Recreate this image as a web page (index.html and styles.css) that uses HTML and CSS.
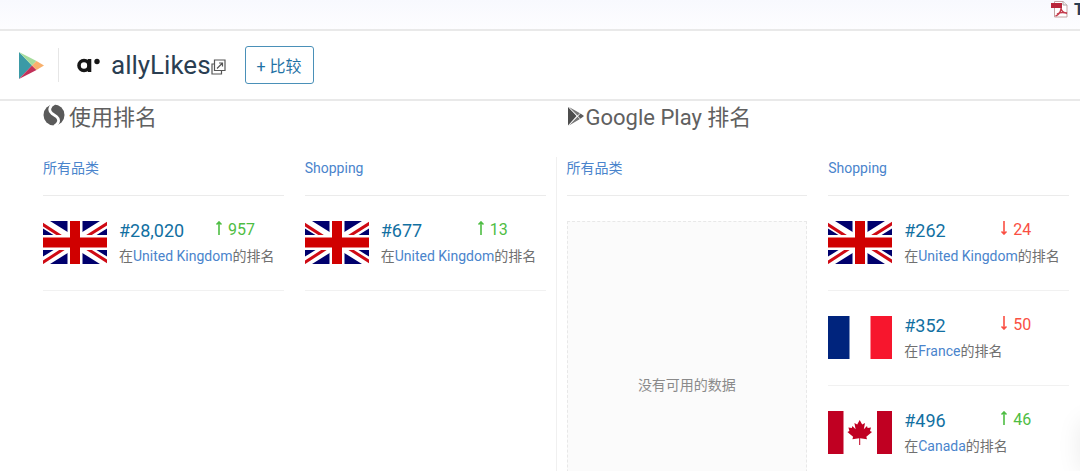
FILE: index.html
```
<!DOCTYPE html>
<html lang="zh-CN">
    <head>
        <meta charset="UTF-8">
        <meta name="viewport" content="width=device-width, initial-scale=1.0">
        <title>allyLikes</title>
        <link rel="stylesheet" href="styles.css">
    </head>
    <body>
        <!-- iconos compartidos -->
        <svg class="sprite" aria-hidden="true">
            <symbol id="flag-gb" viewBox="0 0 64 43">
                <rect width="64" height="43" fill="#00006d"/>
                <path d="M-4 -1L68 44M68 -1L-4 44" stroke="#fff" stroke-width="10"/>
                <path d="M-1 3L20 16.500M42 16.500L65 2M-1 42L22 27M43 27L65 41" stroke="#cf0a14" stroke-width="3"/>
                <path d="M32 0V43M0 21.500H64" stroke="#fff" stroke-width="15"/>
                <path d="M32 0V43M0 21.500H64" stroke="#d00000" stroke-width="10"/>
            </symbol>
            <symbol id="flag-fr" viewBox="0 0 64 43">
                <rect width="64" height="43" fill="#fff"/>
                <rect width="21.500" height="43" fill="#00247d"/>
                <rect x="42.500" width="21.500" height="43" fill="#f7162d"/>
            </symbol>
            <symbol id="flag-ca" viewBox="0 0 64 43">
                <rect width="64" height="43" fill="#fff"/>
                <path d="M0 0H15.500V43H0ZM49 0H64V43H49Z" fill="#c00022"/>
                <path d="M31.700 9L34.200 13.400L37 12L35.800 18.200L39 15L39.600 17L43 16.400L42 20L44 21L38.300 25.800L39 28.200L32.200 27.200V34H31.200V27.200L24.400 28.200L25.100 25.800L19.400 21L21.400 20L20.400 16.400L23.800 17L24.400 15L27.600 18.200L26.400 12L29.200 13.400Z" fill="#c00022"/>
            </symbol>
            <symbol id="arrow-up" viewBox="0 0 8 14">
                <path d="M4 14V1M1.500 3.500L4 1L6.500 3.500" fill="none" stroke="currentColor" stroke-width="1.600"/>
            </symbol>
            <symbol id="arrow-down" viewBox="0 0 8 14">
                <path d="M4 0V13M1.500 10.500L4 13L6.500 10.500" fill="none" stroke="currentColor" stroke-width="1.600"/>
            </symbol>
        </svg>

        <div class="topbar">
            <a class="pdf-link" href="#">
                <svg width="17" height="18" viewBox="0 0 17 18" aria-hidden="true">
                    <path d="M3.500 1.500H12L16 5V17H3.500Z" fill="#fff" stroke="#c4a3a3"/>
                    <path d="M12 1.500V5H16" fill="#eee" stroke="#b0a0a0"/>
                    <rect y="3" width="11" height="5" fill="#b9253b"/>
                    <path d="M10 8C10 10 12 12.500 16 13.500M10 9C9.500 12 7.500 15 4.500 16M6 14C9 12 12 12 16 13" fill="none" stroke="#c43a4c" stroke-width="1.500"/>
                </svg>
                <span>T</span>
            </a>
        </div>

        <header class="app-header">
            <svg class="store-icon" width="25" height="27" viewBox="0 0 25 27" role="img" aria-label="Google Play">
                <path d="M0 0L13 13.500L0 27Z" fill="#3b9aa6"/>
                <path d="M0 0L17.500 9L13 13.500Z" fill="#a5dc9c"/>
                <path d="M0 27L13 13.500L17.500 18Z" fill="#c23159"/>
                <path d="M17.500 9L25 13.500L17.500 18L13 13.500Z" fill="#f8b06c"/>
            </svg>
            <span class="separator"></span>
            <svg class="app-icon" width="24" height="16" viewBox="0 0 24 16" aria-hidden="true">
                <circle cx="7" cy="8.500" r="5" fill="none" stroke="#161616" stroke-width="3.600"/>
                <path d="M12.500 2V15" stroke="#161616" stroke-width="3.600"/>
                <circle cx="20" cy="4.500" r="2.700" fill="#161616"/>
            </svg>
            <h1>allyLikes</h1>
            <a class="external" href="#" aria-label="allyLikes">
                <svg width="15" height="16" viewBox="0 0 15 16">
                    <path d="M3.500 1H14V11.500H3.500ZM3.500 5H1V15H10.500V11.500M6 9.500L11.500 4M8 4H11.500V7.500" fill="none" stroke="#555" stroke-width="1.200"/>
                </svg>
            </a>
            <button class="compare" type="button">+ 比较</button>
        </header>

        <main class="ranks">
            <section class="panel">
                <h2>
                    <svg class="title-icon" width="22" height="22" viewBox="0 0 22 22" aria-hidden="true">
                        <circle cx="11" cy="11" r="10.500" fill="#5a5a5a"/>
                        <path d="M11.500 -0.500C6 2 5.500 7 9 9.500L13.500 12.500C17 15.500 16 20 11 22.500" fill="none" stroke="#fff" stroke-width="2.800"/>
                    </svg>
                    <span>使用排名</span>
                </h2>
                <div class="columns">
                    <div class="column">
                        <h3><a href="#">所有品类</a></h3>
                        <div class="rank">
                            <svg class="flag"><use href="#flag-gb"/></svg>
                            <div class="info">
                                <p class="line"><span class="number">#28,020</span><span class="change up"><svg class="arrow"><use href="#arrow-up"/></svg>957</span></p>
                                <p class="place">在<a href="#">United Kingdom</a>的排名</p>
                            </div>
                        </div>
                    </div>
                    <div class="column">
                        <h3><a href="#">Shopping</a></h3>
                        <div class="rank">
                            <svg class="flag"><use href="#flag-gb"/></svg>
                            <div class="info">
                                <p class="line"><span class="number">#677</span><span class="change up"><svg class="arrow"><use href="#arrow-up"/></svg>13</span></p>
                                <p class="place">在<a href="#">United Kingdom</a>的排名</p>
                            </div>
                        </div>
                    </div>
                </div>
            </section>

            <section class="panel">
                <h2>
                    <svg class="title-icon play" width="18" height="20" viewBox="0 0 18 20" aria-hidden="true">
                        <path d="M1 1V19.500L9.500 10Z" fill="#4d4d4d"/>
                        <path d="M2 1L13 7.200L10.500 9.500ZM2 19.500L13 13L10.500 10.800Z" fill="#777"/>
                        <path d="M13.500 7.500L17 10L13.500 12.700L11 10.200Z" fill="#5c5c5c"/>
                    </svg>
                    <span>Google Play 排名</span>
                </h2>
                <div class="columns">
                    <div class="column">
                        <h3><a href="#">所有品类</a></h3>
                        <div class="empty">没有可用的数据</div>
                    </div>
                    <div class="column">
                        <h3><a href="#">Shopping</a></h3>
                        <div class="rank">
                            <svg class="flag"><use href="#flag-gb"/></svg>
                            <div class="info">
                                <p class="line"><span class="number">#262</span><span class="change down"><svg class="arrow"><use href="#arrow-down"/></svg>24</span></p>
                                <p class="place">在<a href="#">United Kingdom</a>的排名</p>
                            </div>
                        </div>
                        <div class="rank">
                            <svg class="flag"><use href="#flag-fr"/></svg>
                            <div class="info">
                                <p class="line"><span class="number">#352</span><span class="change down"><svg class="arrow"><use href="#arrow-down"/></svg>50</span></p>
                                <p class="place">在<a href="#">France</a>的排名</p>
                            </div>
                        </div>
                        <div class="rank">
                            <svg class="flag"><use href="#flag-ca"/></svg>
                            <div class="info">
                                <p class="line"><span class="number">#496</span><span class="change up"><svg class="arrow"><use href="#arrow-up"/></svg>46</span></p>
                                <p class="place">在<a href="#">Canada</a>的排名</p>
                            </div>
                        </div>
                    </div>
                </div>
            </section>
        </main>

        <div class="side-widget"></div>
    </body>
</html>
```

FILE: styles.css
```
* {
    box-sizing: border-box;
}

body {
    margin: 0;
    height: 100vh;
    overflow: hidden;
    background-color: #fff;
    font-family: Roboto, 'Noto Sans CJK SC', sans-serif;
    font-size: 14px;
    color: #707070;
}

h1,
h2,
h3,
p {
    margin: 0;
    font-weight: normal;
}

a {
    color: #4a84cc;
    text-decoration: none;
}

svg {
    display: block;
    flex-shrink: 0;
}

.sprite {
    position: absolute;
    width: 0;
    height: 0;
}

.topbar {
    display: flex;
    justify-content: flex-end;
    height: 31px;
    background: linear-gradient(#f8f9fe, #fdfdff);
    border-bottom: 2px solid #e9e9e9;
}

.pdf-link {
    display: flex;
    gap: 6px;
    height: 20px;
    line-height: 20px;
    margin-right: -4px;
    font-size: 16px;
    font-weight: bold;
    color: #2a3e52;
}

.app-header {
    display: flex;
    align-items: center;
    height: 70px;
    padding: 0 19px;
    border-bottom: 2px solid #e9e9e9;
}

.separator {
    width: 1px;
    height: 34px;
    margin: 0 18px 0 14px;
    background-color: #e6e6e6;
}

.app-header h1 {
    margin-left: 10px;
    font-size: 26px;
    line-height: 32px;
    color: #2a3e52;
}

.external {
    margin-top: 4px;
}

.compare {
    height: 38px;
    margin-left: 19px;
    padding: 0 11px;
    background-color: #fff;
    border: 1px solid #4a90b8;
    border-radius: 3px;
    font-family: inherit;
    font-size: 16px;
    color: #1f72a5;
    cursor: pointer;
}

.ranks {
    display: grid;
    grid-template-columns: 1fr 1fr;
    gap: 21px;
    padding: 0 11px 0 43px;
}

h2 {
    display: flex;
    align-items: center;
    height: 34px;
    font-size: 22px;
    line-height: 34px;
    color: #606060;
}

.title-icon {
    margin: 0 4px 6px 0;
}

.title-icon.play {
    margin: 0 1px 4px 0;
}

.columns {
    display: grid;
    grid-template-columns: 1fr 1fr;
    gap: 21px;
    margin-top: 22px;
}

.panel + .panel .columns {
    margin-left: -11px;
    padding-left: 10px;
    border-left: 1px solid #f0f0f0;
}

h3 {
    height: 39px;
    font-size: 14px;
    line-height: 22px;
    border-bottom: 1px solid #ebebeb;
}

.rank {
    display: flex;
    gap: 12px;
    padding: 25px 0 26px;
    border-bottom: 1px solid #f1f1f1;
}

.flag {
    width: 64px;
    height: 43px;
}

.info {
    white-space: nowrap;
}

.line {
    display: grid;
    grid-template-columns: 96px auto;
    margin-bottom: 7px;
    line-height: 20px;
}

.number {
    font-size: 18px;
    color: #1270a2;
}

.change {
    display: flex;
    gap: 5px;
    font-size: 16px;
    line-height: 18px;
}

.arrow {
    width: 8px;
    height: 14px;
}

.up {
    color: #4ebd43;
}

.down {
    color: #fa4f43;
}

.place {
    line-height: 16px;
}

.empty {
    display: flex;
    align-items: center;
    justify-content: center;
    height: 326px;
    margin-top: 25px;
    background-color: #fbfbfb;
    border: 1px dashed #e8e8e8;
    color: #8a8a8a;
}

/* widget fuera de la pantalla, solo se ve la sombra */
.side-widget {
    position: fixed;
    right: -40px;
    bottom: 0;
    width: 40px;
    height: 50px;
    box-shadow: 0 0 24px rgba(0, 0, 0, 0.08);
}
```
